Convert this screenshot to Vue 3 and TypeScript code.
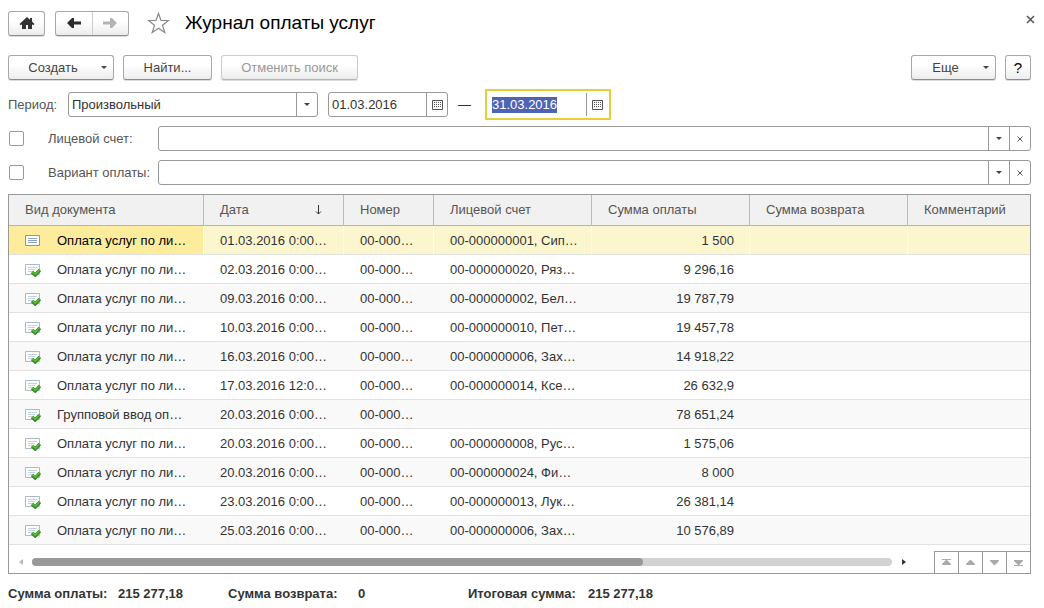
<script setup lang="ts">
import { onMounted, ref } from 'vue'

interface Row {
  kind: string
  date: string
  num: string
  account: string
  paid: string
  posted: boolean
}

const pay = 'Оплата услуг по ли…'
const make = (date: string, account: string, paid: string, kind = pay, posted = true): Row => ({
  kind, date, num: '00-000…', account, paid, posted,
})

const rows: Row[] = [
  make('01.03.2016 0:00…', '00-000000001, Сип…', '1 500', pay, false),
  make('02.03.2016 0:00…', '00-000000020, Ряз…', '9 296,16'),
  make('09.03.2016 0:00…', '00-000000002, Бел…', '19 787,79'),
  make('10.03.2016 0:00…', '00-000000010, Пет…', '19 457,78'),
  make('16.03.2016 0:00…', '00-000000006, Зах…', '14 918,22'),
  make('17.03.2016 12:0…', '00-000000014, Ксе…', '26 632,9'),
  make('20.03.2016 0:00…', '', '78 651,24', 'Групповой ввод оп…'),
  make('20.03.2016 0:00…', '00-000000008, Рус…', '1 575,06'),
  make('20.03.2016 0:00…', '00-000000024, Фи…', '8 000'),
  make('23.03.2016 0:00…', '00-000000013, Лук…', '26 381,14'),
  make('25.03.2016 0:00…', '00-000000006, Зах…', '10 576,89'),
]

const filters = [
  { id: 'account', label: 'Лицевой счет:' },
  { id: 'variant', label: 'Вариант оплаты:' },
]

const pagers = [
  { name: 'В начало', d: 'M3 2h9v1H3zM7 3h1l4 4v1H3V7z' },
  { name: 'Вверх', d: 'M7 3h1l4 4v1H3V7z' },
  { name: 'Вниз', d: 'M3 3h9v1L8 8H7L3 4z' },
  { name: 'В конец', d: 'M3 3h9v1L8 8H7L3 4zM3 8h9v1H3z' },
]

const selected = ref(0)
const from = ref('01.03.2016')
const to = ref('31.03.2016')
const toInput = ref<HTMLInputElement | null>(null)

onMounted(() => {
  toInput.value?.focus()
  toInput.value?.select()
})
</script>

<template>
  <main class="page">
    <header class="head">
      <button class="btn home" aria-label="Начальная страница">
        <svg width="16" height="14" viewBox="0 0 16 14"><path d="M8 1 .5 8l1.200 1.300L3 8.200V13h4V9h2v4h4V8.200l1.300 1.100L15.500 8 13 5.600V2h-2v1.800z" fill="#333" /></svg>
      </button>
      <div class="nav">
        <button aria-label="Назад">
          <svg width="14" height="12" viewBox="0 0 14 12"><path d="M0 6 5 1h2v3.500h7v3H7V11H5z" fill="#2b2b2b" /></svg>
        </button>
        <button aria-label="Вперед" disabled>
          <svg width="14" height="12" viewBox="0 0 14 12"><path d="M14 6 9 1H7v3.500H0v3h7V11h2z" fill="#b4b4b4" /></svg>
        </button>
      </div>
      <button class="plain star" aria-label="В избранное">
        <svg width="23" height="22" viewBox="0 0 23 22"><path d="m11.500 1.500 2.500 7h7.500l-6 4.700 2.300 7.300-6.300-4.300-6.300 4.300 2.300-7.300-6-4.700H9z" fill="#fff" stroke="#888" stroke-width="1.200" /></svg>
      </button>
      <h1>Журнал оплаты услуг</h1>
      <button class="plain close" aria-label="Закрыть">
        <svg width="9" height="9" viewBox="0 0 9 9"><path d="m1 1 7 7M8 1 1 8" stroke="#555" stroke-width="1.500" /></svg>
      </button>
    </header>

    <div class="tools">
      <button class="btn menu create"><span>Создать</span><svg width="6" height="3" viewBox="0 0 6 3"><path d="M0 0h6L3 3z" fill="#444" /></svg></button>
      <button class="btn find">Найти...</button>
      <button class="btn cancel" disabled>Отменить поиск</button>
      <button class="btn menu more"><span>Еще</span><svg width="6" height="3" viewBox="0 0 6 3"><path d="M0 0h6L3 3z" fill="#444" /></svg></button>
      <button class="btn help" aria-label="Справка">?</button>
    </div>

    <div class="period">
      <label class="caption" for="period">Период:</label>
      <div class="field combo">
        <select id="period"><option>Произвольный</option></select>
        <span class="drop"><svg width="6" height="3" viewBox="0 0 6 3"><path d="M0 0h6L3 3z" fill="#444" /></svg></span>
      </div>
      <div class="field date">
        <input v-model="from" type="text" aria-label="Начало периода">
        <button aria-label="Выбрать начало периода">
          <svg width="11" height="10" viewBox="0 0 11 10"><path d="M.5.5h10v9H.5z" fill="none" stroke="#555" /><path d="M2 2.500h7M2 4.500h7M2 6.500h7" stroke="#555" stroke-dasharray="1 1" /></svg>
        </button>
      </div>
      <span class="dash">—</span>
      <div class="focus">
        <input ref="toInput" v-model="to" type="text" aria-label="Конец периода">
        <button aria-label="Выбрать конец периода">
          <svg width="11" height="10" viewBox="0 0 11 10"><path d="M.5.5h10v9H.5z" fill="none" stroke="#555" /><path d="M2 2.500h7M2 4.500h7M2 6.500h7" stroke="#555" stroke-dasharray="1 1" /></svg>
        </button>
      </div>
    </div>

    <div v-for="f in filters" :key="f.id" class="filter">
      <input type="checkbox" class="check" :aria-label="'Отбор: ' + f.label">
      <label :for="f.id">{{ f.label }}</label>
      <div class="field wide">
        <input :id="f.id" type="text">
        <button aria-label="Выбрать"><svg width="6" height="3" viewBox="0 0 6 3"><path d="M0 0h6L3 3z" fill="#444" /></svg></button>
        <button aria-label="Очистить"><svg width="6" height="6" viewBox="0 0 6 6"><path d="m.5.5 5 5m0-5-5 5" stroke="#555" /></svg></button>
      </div>
    </div>

    <section class="grid">
      <table>
        <colgroup>
          <col class="c-kind"><col class="c-date"><col class="c-num"><col class="c-sum"><col class="c-sum"><col class="c-sum"><col>
        </colgroup>
        <thead>
          <tr>
            <th>Вид документа</th>
            <th>
              <div class="sort">Дата<svg width="7" height="10" viewBox="0 0 7 10"><path d="M3.500 0v9M1 6.500l2.500 2.500L6 6.500" fill="none" stroke="#333" /></svg></div>
            </th>
            <th>Номер</th>
            <th>Лицевой счет</th>
            <th>Сумма оплаты</th>
            <th>Сумма возврата</th>
            <th>Комментарий</th>
          </tr>
        </thead>
        <tbody>
          <tr v-for="(r, i) in rows" :key="i" :class="{ active: i === selected }" @click="selected = i">
            <td>
              <div class="doc">
                <svg v-if="!r.posted" width="16" height="14" viewBox="0 0 16 14"><path d="M.5 1.500h14v10H.5z" fill="#fff" stroke="#8298a8" /><path d="M3 4.500h9M3 6.500h9M3 8.500h9" stroke="#8aa4be" /></svg>
                <svg v-else width="16" height="14" viewBox="0 0 16 14"><path d="M.5 1.500h14v10H.5z" fill="#fff" stroke="#a9bac8" /><path d="M3 4.500h9M3 6.500h7M3 8.500h4" stroke="#c3d1de" /><path d="m7 9 3.200 3L14.800 7" fill="none" stroke="#2f8a22" stroke-width="3.400" /><path d="m7.300 8.800 2.900 2.500L14.500 6.800" fill="none" stroke="#62bd43" stroke-width="1.500" /></svg>
                {{ r.kind }}
              </div>
            </td>
            <td>{{ r.date }}</td>
            <td>{{ r.num }}</td>
            <td>{{ r.account }}</td>
            <td class="money">{{ r.paid }}</td>
            <td></td>
            <td></td>
          </tr>
        </tbody>
      </table>
      <div class="foot">
        <button class="plain arrow" aria-label="Влево"><svg width="4" height="6" viewBox="0 0 4 6"><path d="M4 0v6L0 3z" fill="#b8b8b8" /></svg></button>
        <div class="track"><div class="thumb"></div></div>
        <button class="plain arrow" aria-label="Вправо"><svg width="4" height="6" viewBox="0 0 4 6"><path d="M0 0v6l4-3z" fill="#333" /></svg></button>
        <div class="pagers">
          <button v-for="p in pagers" :key="p.name" :aria-label="p.name"><svg width="15" height="11" viewBox="0 0 15 11"><path :d="p.d" fill="#aaa" /></svg></button>
        </div>
      </div>
    </section>

    <footer class="totals">
      <span>Сумма оплаты:</span><span>215 277,18</span>
      <span>Сумма возврата:</span><span>0</span>
      <span>Итоговая сумма:</span><span>215 277,18</span>
    </footer>
  </main>
</template>

<style>
body {
  background: #fff;
}
</style>

<style scoped>
.page {
  padding: 10px 13px 4px 8px;
  font: 13px/16px "Liberation Sans", Arial, sans-serif;
  color: #333;
}
.page * {
  box-sizing: border-box;
}
svg {
  display: block;
  flex: none;
}
button,
input,
select {
  margin: 0;
  padding: 0;
  border: 0;
  background: none;
  font: inherit;
  color: inherit;
  outline: none;
  border-radius: 0;
}
button {
  display: flex;
  align-items: center;
  justify-content: center;
  flex: none;
}
.btn,
.nav {
  border: 1px solid #a8a8a8;
  border-bottom-color: #8c8c8c;
  border-radius: 3px;
  background: linear-gradient(#fff 40%, #ececec);
  box-shadow: 0 1px 0 #dcdcdc;
}
.head {
  display: flex;
  align-items: center;
  height: 26px;
}
.home {
  width: 37px;
  height: 25px;
}
.nav {
  display: flex;
  width: 74px;
  height: 25px;
  margin-left: 10px;
}
.nav button {
  flex: 1;
}
.nav button + button {
  border-left: 1px solid #ccc;
}
.star {
  margin-left: 18px;
}
h1 {
  margin: 0 auto 0 15px;
  font-size: 19px;
  line-height: 26px;
  font-weight: 400;
  color: #000;
}
.close {
  width: 9px;
  height: 9px;
  margin-bottom: 7px;
  margin-right: -4px;
}
.tools {
  display: flex;
  height: 25px;
  margin-top: 19px;
  gap: 9px;
  color: #444;
}
.btn.menu {
  padding-right: 6px;
}
.menu span {
  flex: 1;
  padding-right: 4px;
}
.create {
  width: 106px;
}
.find {
  width: 89px;
}
.cancel {
  width: 137px;
  color: #999;
  border-color: #ccc;
  border-bottom-color: #b4b4b4;
}
.more {
  width: 85px;
  margin-left: auto;
}
.help {
  width: 26px;
  font-size: 15px;
  color: #000;
}
.period {
  display: flex;
  align-items: center;
  height: 31px;
  margin-top: 9px;
}
.caption {
  width: 60px;
}
.caption,
.filter label {
  color: #555;
}
.field {
  display: flex;
  height: 25px;
  border: 1px solid #999;
  border-radius: 3px;
  background: #fff;
}
.field input,
.focus input {
  flex: 1;
  min-width: 0;
  padding-left: 3px;
}
.field button,
.drop {
  width: 21px;
  border-left: 1px solid #999;
}
.combo {
  position: relative;
  width: 250px;
}
.combo select {
  flex: 1;
  appearance: none;
  padding: 0 24px 0 3px;
}
.drop {
  position: absolute;
  top: 0;
  right: 0;
  bottom: 0;
  display: flex;
  align-items: center;
  justify-content: center;
  pointer-events: none;
}
.date {
  width: 120px;
  margin-left: 10px;
}
.dash {
  width: 37px;
  padding-left: 10px;
}
.focus {
  display: flex;
  width: 126px;
  height: 31px;
  padding: 2px;
  border: 2px solid #e6ce3c;
}
.focus button {
  width: 21px;
  border-left: 1px solid #999;
}
.focus input::selection {
  background: #4f62b4;
  color: #fff;
}
.filter {
  display: flex;
  align-items: center;
  margin-top: 9px;
}
.period + .filter {
  margin-top: 6px;
}
.check {
  appearance: none;
  width: 15px;
  height: 15px;
  margin: 0 24px 0 1px;
  border: 1px solid #999;
  border-radius: 2px;
}
.filter label {
  width: 110px;
}
.wide {
  flex: 1;
}
.grid {
  margin-top: 9px;
  border: 1px solid #999;
}
table {
  width: 100%;
  table-layout: fixed;
  border-collapse: separate;
  border-spacing: 0;
}
.c-kind {
  width: 195px;
}
.c-date {
  width: 140px;
}
.c-num {
  width: 90px;
}
.c-sum {
  width: 158px;
}
th {
  height: 31px;
  padding: 0 15px 0 16px;
  border-right: 1px solid #bbb;
  border-bottom: 1px solid #b4b4b4;
  background: #f1f1f1;
  color: #555;
  font-weight: 400;
  text-align: left;
  white-space: nowrap;
}
th:last-child {
  border-right: 0;
}
.sort {
  display: flex;
  align-items: center;
  justify-content: space-between;
  padding-right: 6px;
}
td {
  height: 29px;
  padding: 2px 15px 0 16px;
  border-bottom: 1px solid #e2e2e2;
  white-space: nowrap;
}
tr:nth-child(odd) td {
  background: #f9f9f9;
}
tr.active td {
  background: #fcf6cf;
  border-right: 1px solid #fefbe8;
}
tr.active td:first-child {
  background: #fdec9c;
  color: #000;
}
tr.active td:last-child {
  border-right: 0;
}
.doc {
  display: flex;
  align-items: center;
  gap: 16px;
}
.money {
  padding-right: 16px;
  text-align: right;
}
tr.active .money {
  padding-right: 15px;
}
.foot {
  display: flex;
  align-items: center;
  height: 28px;
  padding-top: 6px;
}
.arrow {
  width: 23px;
  height: 20px;
}
.track {
  flex: 1;
  height: 8px;
  border-radius: 4px;
  background: #d2d2d2;
}
.thumb {
  width: 71%;
  height: 8px;
  border-radius: 4px;
  background: #999;
}
.pagers {
  display: flex;
  align-self: flex-end;
  margin-left: 19px;
  border-top: 1px solid #999;
}
.pagers button {
  width: 24px;
  height: 21px;
  border-left: 1px solid #999;
}
.totals {
  display: grid;
  grid-template-columns: 110px 110px 130px 110px 120px auto;
  margin-top: 12px;
  font-weight: 700;
}
</style>
